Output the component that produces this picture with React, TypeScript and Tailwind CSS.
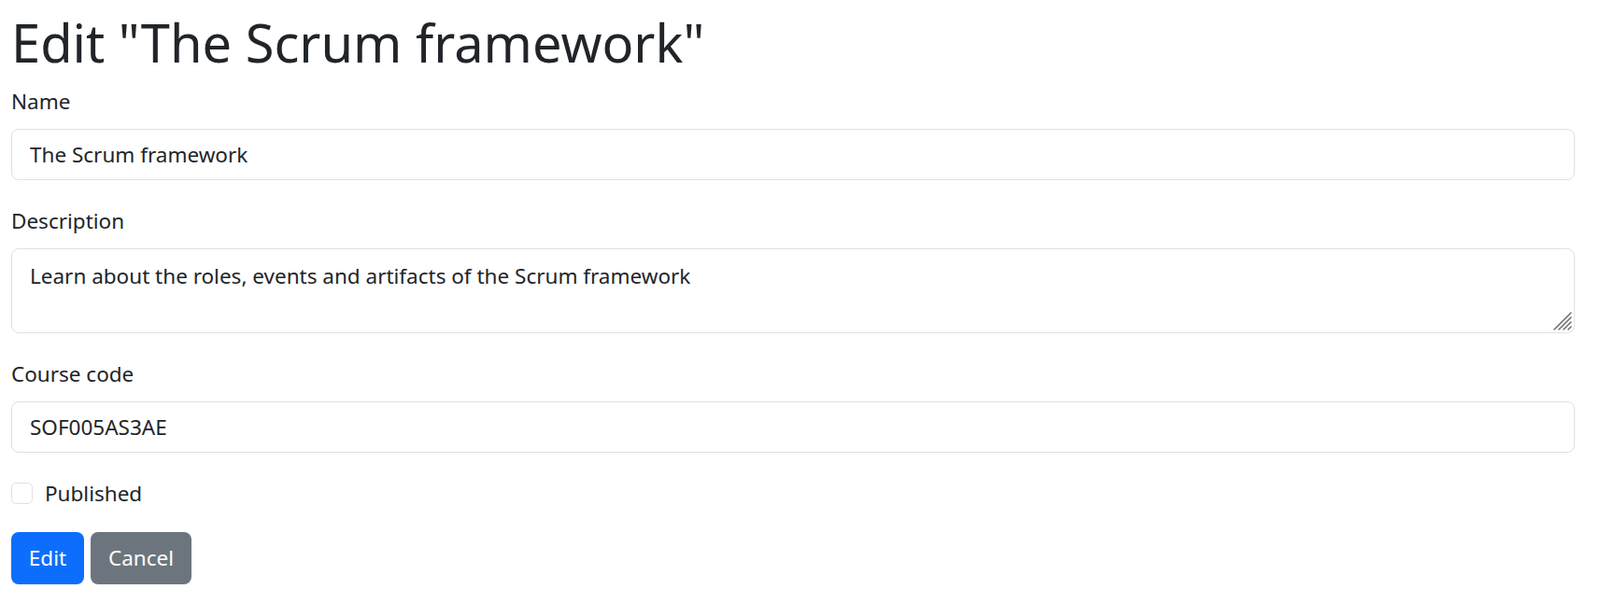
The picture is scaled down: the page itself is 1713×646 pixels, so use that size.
export default function App() {
  return (
    <div
      className="min-h-screen bg-white pl-[12px] pr-[27px] pt-[10px] text-[#212529]"
      style={{ fontFamily: '"Noto Sans", "Open Sans", sans-serif' }}
    >
      <h1 className="mb-[12px] text-[56px] font-normal leading-[70px]">Edit "The Scrum framework"</h1>
      <form className="flex flex-col">
        <div className="mb-[27px]">
          <label className="mb-[13px] block text-[22.5px] leading-[33px]">Name</label>
          <input
            type="text"
            defaultValue="The Scrum framework"
            className="block h-[55px] w-full rounded-[8px] border border-[#dee2e6] px-[19px] text-[22.5px] outline-none"
          />
        </div>
        <div className="mb-[27px]">
          <label className="mb-[13px] block text-[22.5px] leading-[33px]">Description</label>
          <div className="relative">
            <textarea
              defaultValue="Learn about the roles, events and artifacts of the Scrum framework"
              className="block h-[91px] w-full resize-none rounded-[8px] border border-[#dee2e6] px-[19px] pt-[12px] text-[22.5px] leading-[33px] outline-none"
            />
            {/* resize grip */}
            <svg
              className="pointer-events-none absolute bottom-[2px] right-[2px]"
              width="22"
              height="22"
              viewBox="0 0 22 22"
            >
              <g stroke="#6b6b6b" strokeWidth="1.5" strokeLinecap="round">
                <line x1="2" y1="20" x2="20" y2="2" />
                <line x1="7" y1="20" x2="20" y2="7" />
                <line x1="12" y1="20" x2="20" y2="12" />
                <line x1="17" y1="20" x2="20" y2="17" />
              </g>
            </svg>
          </div>
        </div>
        <div className="mb-[27px]">
          <label className="mb-[13px] block text-[22.5px] leading-[33px]">Course code</label>
          <input
            type="text"
            defaultValue="SOF005AS3AE"
            className="block h-[55px] w-full rounded-[8px] border border-[#dee2e6] px-[19px] text-[22.5px] outline-none"
          />
        </div>
        <div className="mb-[25px] flex items-center gap-[13px]">
          <input
            type="checkbox"
            className="h-[23px] w-[23px] appearance-none rounded-[5px] border border-[#dee2e6] bg-white"
          />
          <label className="text-[22.5px] leading-[33px]">Published</label>
        </div>
        <div className="flex gap-[7px]">
          <button
            type="button"
            className="h-[56px] w-[78px] rounded-[8px] bg-[#0d6efd] text-[22.5px] text-white"
          >
            Edit
          </button>
          <button
            type="button"
            className="h-[56px] w-[108px] rounded-[8px] bg-[#6c757d] text-[22.5px] text-white"
          >
            Cancel
          </button>
        </div>
      </form>
    </div>
  );
}
